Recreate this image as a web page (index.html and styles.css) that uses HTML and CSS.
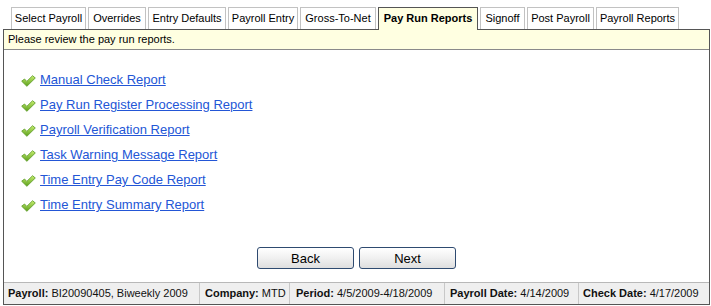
FILE: index.html
```html
<!DOCTYPE html>
<html>
<head>
<meta charset="utf-8">
<title>Pay Run Reports</title>
<link rel="stylesheet" href="styles.css">
</head>
<body>
<div class="page">
  <ul class="tabs">
    <li class="tab t1">Select Payroll</li>
    <li class="tab t2">Overrides</li>
    <li class="tab t3">Entry Defaults</li>
    <li class="tab t4">Payroll Entry</li>
    <li class="tab t5">Gross-To-Net</li>
    <li class="tab t6 active">Pay Run Reports</li>
    <li class="tab t7">Signoff</li>
    <li class="tab t8">Post Payroll</li>
    <li class="tab t9">Payroll Reports</li>
  </ul>
  <div class="frame">
    <div class="msg">Please review the pay run reports.</div>
    <div class="content">
      <ul class="reports">
        <li><svg class="check" viewBox="0 0 15 12" width="15" height="12"><defs><linearGradient id="g" x1="0" y1="0" x2="0" y2="1"><stop offset="0" stop-color="#c8ef70"/><stop offset="1" stop-color="#5a9e1a"/></linearGradient></defs><path d="M0.7 6.2 L3.5 4 L5.8 6.4 L11.6 0.7 L14.3 3 L5.9 11.3 Z" fill="url(#g)" stroke="#639f2c" stroke-width="0.9" stroke-linejoin="round"/></svg><a href="#">Manual Check Report</a></li>
        <li><svg class="check" viewBox="0 0 15 12" width="15" height="12"><path d="M0.7 6.2 L3.5 4 L5.8 6.4 L11.6 0.7 L14.3 3 L5.9 11.3 Z" fill="url(#g)" stroke="#639f2c" stroke-width="0.9" stroke-linejoin="round"/></svg><a href="#">Pay Run Register Processing Report</a></li>
        <li><svg class="check" viewBox="0 0 15 12" width="15" height="12"><path d="M0.7 6.2 L3.5 4 L5.8 6.4 L11.6 0.7 L14.3 3 L5.9 11.3 Z" fill="url(#g)" stroke="#639f2c" stroke-width="0.9" stroke-linejoin="round"/></svg><a href="#">Payroll Verification Report</a></li>
        <li><svg class="check" viewBox="0 0 15 12" width="15" height="12"><path d="M0.7 6.2 L3.5 4 L5.8 6.4 L11.6 0.7 L14.3 3 L5.9 11.3 Z" fill="url(#g)" stroke="#639f2c" stroke-width="0.9" stroke-linejoin="round"/></svg><a href="#">Task Warning Message Report</a></li>
        <li><svg class="check" viewBox="0 0 15 12" width="15" height="12"><path d="M0.7 6.2 L3.5 4 L5.8 6.4 L11.6 0.7 L14.3 3 L5.9 11.3 Z" fill="url(#g)" stroke="#639f2c" stroke-width="0.9" stroke-linejoin="round"/></svg><a href="#">Time Entry Pay Code Report</a></li>
        <li><svg class="check" viewBox="0 0 15 12" width="15" height="12"><path d="M0.7 6.2 L3.5 4 L5.8 6.4 L11.6 0.7 L14.3 3 L5.9 11.3 Z" fill="url(#g)" stroke="#639f2c" stroke-width="0.9" stroke-linejoin="round"/></svg><a href="#">Time Entry Summary Report</a></li>
      </ul>
      <div class="buttons">
        <button class="btn">Back</button>
        <button class="btn">Next</button>
      </div>
    </div>
    <div class="footer">
      <div class="cell c1"><b>Payroll:</b> BI20090405, Biweekly 2009</div>
      <div class="cell c2"><b>Company:</b> MTD</div>
      <div class="cell c3"><b>Period:</b> 4/5/2009-4/18/2009</div>
      <div class="cell c4"><b>Payroll Date:</b> 4/14/2009</div>
      <div class="cell c5"><b>Check Date:</b> 4/17/2009</div>
    </div>
  </div>
</div>
</body>
</html>
```

FILE: styles.css
```css
html, body {
  margin: 0;
  padding: 0;
  background: #fff;
  font-family: "Liberation Sans", Arial, sans-serif;
  color: #000;
}

.page {
  padding: 7px 0 0 3px;
}

.tabs {
  display: flex;
  gap: 2px;
  margin: 0;
  padding: 0 0 0 8px;
  list-style: none;
  height: 22px;
  position: relative;
  z-index: 1;
}

.tab {
  box-sizing: border-box;
  height: 22px;
  border: 1px solid #c2c2c2;
  border-bottom: none;
  background: #fff;
  font-size: 11px;
  line-height: 20px;
  text-align: center;
  white-space: nowrap;
}

.t1 { width: 75px; }
.t2 { width: 58px; }
.t3 { width: 78px; }
.t4 { width: 70px; }
.t5 { width: 76px; }
.t6 { width: 100px; }
.t7 { width: 45px; }
.t8 { width: 67px; }
.t9 { width: 83px; }

.tab.active {
  height: 23px;
  border-color: #555;
  background: #ffffe1;
  font-weight: bold;
}

.frame {
  box-sizing: border-box;
  width: 707px;
  border: 1px solid #555;
}

.msg {
  height: 19px;
  line-height: 19px;
  padding-left: 4px;
  background: #ffffe1;
  border-bottom: 1px solid #8a8a8a;
  font-size: 11px;
}

.content {
  height: 232px;
}

.reports {
  list-style: none;
  margin: 0;
  padding: 17px 0 0 17px;
}

.reports li {
  height: 25px;
  line-height: 25px;
  font-size: 13px;
  white-space: nowrap;
}

.check {
  display: inline-block;
  vertical-align: -3px;
  margin-right: 4px;
}

.reports a {
  color: #2356d6;
  text-decoration: underline;
}

.buttons {
  display: flex;
  justify-content: center;
  gap: 5px;
  margin-top: 30px;
}

.btn {
  box-sizing: border-box;
  width: 97px;
  height: 22px;
  padding: 0;
  border: 1px solid #2e4a70;
  border-radius: 3px;
  background: linear-gradient(#ffffff, #f2f2f2 45%, #dedede);
  font-family: "Liberation Sans", Arial, sans-serif;
  font-size: 13px;
  color: #000;
}

.footer {
  display: flex;
  height: 21px;
  border-top: 1px solid #b8b8b8;
  background: #efefef;
  font-size: 11px;
  line-height: 20px;
  white-space: nowrap;
}

.cell {
  box-sizing: border-box;
  padding-left: 5px;
  border-right: 1px solid #c8c8c8;
  color: #111;
}

.c1 { width: 196px; padding-left: 4px; }
.c2 { width: 90px; }
.c3 { width: 155px; padding-left: 6px; }
.c4 { width: 134px; }
.c5 { flex: 1; border-right: none; padding-left: 4px; }
```
